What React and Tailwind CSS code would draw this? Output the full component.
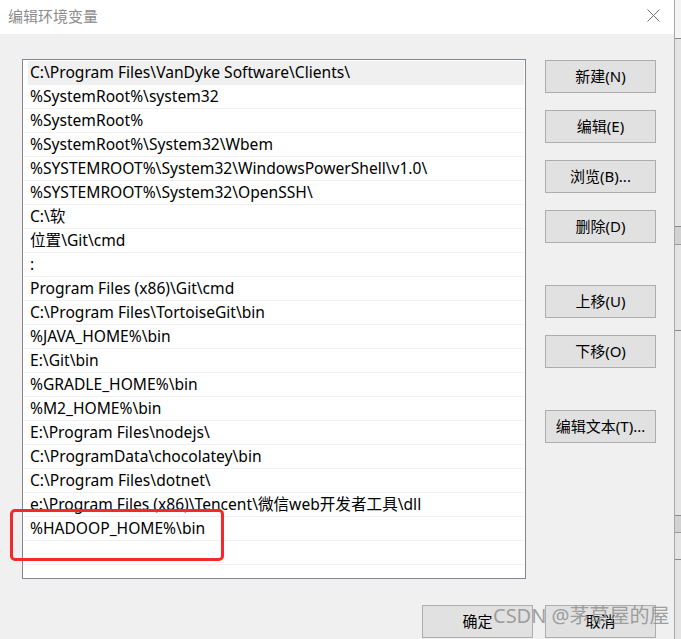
const PATHS = [
  'C:\\Program Files\\VanDyke Software\\Clients\\',
  '%SystemRoot%\\system32',
  '%SystemRoot%',
  '%SystemRoot%\\System32\\Wbem',
  '%SYSTEMROOT%\\System32\\WindowsPowerShell\\v1.0\\',
  '%SYSTEMROOT%\\System32\\OpenSSH\\',
  'C:\\软',
  '位置\\Git\\cmd',
  ':',
  'Program Files (x86)\\Git\\cmd',
  'C:\\Program Files\\TortoiseGit\\bin',
  '%JAVA_HOME%\\bin',
  'E:\\Git\\bin',
  '%GRADLE_HOME%\\bin',
  '%M2_HOME%\\bin',
  'E:\\Program Files\\nodejs\\',
  'C:\\ProgramData\\chocolatey\\bin',
  'C:\\Program Files\\dotnet\\',
  'e:\\Program Files (x86)\\Tencent\\微信web开发者工具\\dll',
  '%HADOOP_HOME%\\bin',
  '',
];

function Btn({ children, className = '' }) {
  return (
    <button
      className={`w-[111px] h-[33px] shrink-0 bg-[#e1e1e1] border border-[#adadad] text-[15px] text-black flex items-center justify-center leading-none ${className}`}
    >
      {children}
    </button>
  );
}

export default function App() {
  return (
    <div className="relative w-[681px] h-[639px] overflow-hidden bg-[#f0f0f0] flex font-['Noto_Sans','Noto_Sans_CJK_SC',sans-serif]">
      <div className="w-[674px] shrink-0 flex flex-col">
        {/* Title bar */}
        <div className="h-[34px] bg-white flex items-center justify-between pl-[8px] pr-[14px]">
          <span className="text-[15px] text-[#8c8c8c] leading-none -mt-[2px]">编辑环境变量</span>
          <svg width="13" height="13" viewBox="0 0 13 13" className="-mt-[4px]">
            <path d="M0.5 0.5 L12.5 12.5 M12.5 0.5 L0.5 12.5" stroke="#6f6f6f" strokeWidth="1" fill="none" />
          </svg>
        </div>

        {/* Body */}
        <div className="flex pt-[25px] pl-[22px]">
          <div className="w-[504px] h-[520px] border border-[#828790] bg-white pt-[1px] overflow-hidden">
            {PATHS.map((p, i) => (
              <div
                key={i}
                className={`h-[24px] border-b border-[#f0f0f0] flex items-center text-[15.6px] text-black whitespace-nowrap leading-none ${
                  i === 0 ? 'ml-[5px] mr-[1px] pl-[2px] bg-[#f0f0f0]' : 'pl-[7px]'
                }`}
              >
                {p}
              </div>
            ))}
          </div>

          <div className="flex flex-col ml-[19px] pt-[1px]">
            <Btn>新建(N)</Btn>
            <Btn className="mt-[17px]">编辑(E)</Btn>
            <Btn className="mt-[17px]">浏览(B)...</Btn>
            <Btn className="mt-[17px]">删除(D)</Btn>
            <Btn className="mt-[42px]">上移(U)</Btn>
            <Btn className="mt-[17px]">下移(O)</Btn>
            <Btn className="mt-[42px]">编辑文本(T)...</Btn>
          </div>
        </div>

        <div className="flex justify-end gap-[12px] mt-[26px] pr-[18px]">
          <Btn>确定</Btn>
          <Btn>取消</Btn>
        </div>
      </div>

      {/* Edge of window behind */}
      <div className="flex-1 border-l border-[#a8a8a8] bg-[#e4e4e4] flex flex-col">
        <div className="h-[39px] bg-[#f4f4f4] border-b border-[#8a8a8a]" />
        <div className="h-[188px] border-b border-[#8a8a8a]" />
        <div className="h-[18px] border-b border-[#9a9a9a] bg-[#d2d2d2]" />
        <div className="h-[86px] border-b border-[#8a8a8a]" />
        <div className="h-[185px] border-b border-[#8a8a8a]" />
        <div className="h-[17px] border-b border-[#9a9a9a] bg-[#d2d2d2]" />
        <div className="h-[27px] border-b border-[#8a8a8a]" />
      </div>

      {/* Red annotation box */}
      <div className="absolute left-[10px] top-[509px] w-[214px] h-[52px] border-[3px] border-[#f42a2a] rounded-[5px]" />

      {/* Watermark */}
      <div className="absolute left-[493px] top-[606px] text-[20px] leading-none text-[#8a8a8a]/80 whitespace-nowrap">
        CSDN @茅草屋的屋
      </div>
    </div>
  );
}
